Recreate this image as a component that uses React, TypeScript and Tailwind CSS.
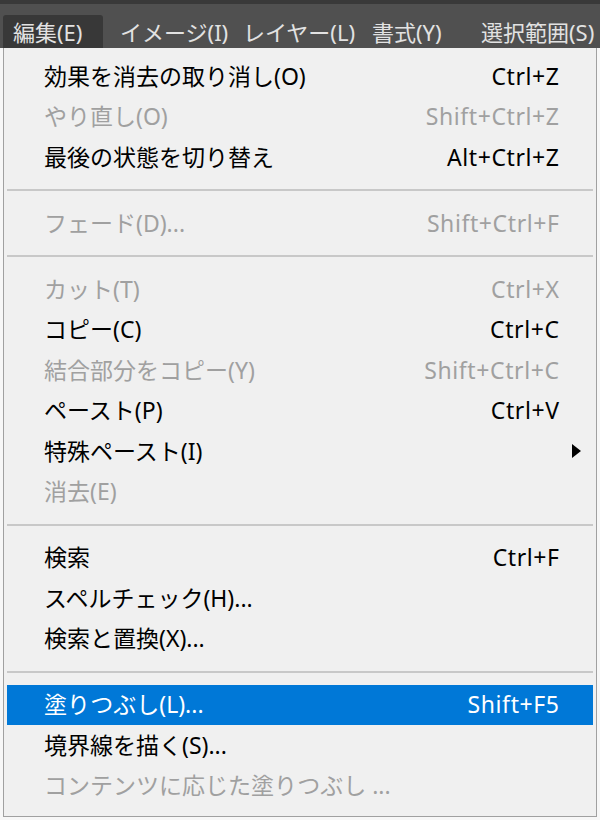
import type { ReactNode } from 'react';

// ─── Data ─────────────────────────────────────────────────────────────────────
type Item = {
  label: string;
  shortcut?: string;
  disabled?: boolean;
  active?: boolean;
  submenu?: boolean;
};

type Entry = Item | 'sep';

const MENU_BAR: { label: string; width: string; active?: boolean }[] = [
  { label: '編集(E)', width: 'w-[100px]', active: true },
  { label: 'イメージ(I)', width: 'w-[116px]' },
  { label: 'レイヤー(L)', width: 'w-[122px]' },
  { label: '書式(Y)', width: 'w-[102px]' },
  { label: '選択範囲(S)', width: 'w-[140px]' },
];

const ENTRIES: Entry[] = [
  { label: '効果を消去の取り消し(O)', shortcut: 'Ctrl+Z' },
  { label: 'やり直し(O)', shortcut: 'Shift+Ctrl+Z', disabled: true },
  { label: '最後の状態を切り替え', shortcut: 'Alt+Ctrl+Z' },
  'sep',
  { label: 'フェード(D)...', shortcut: 'Shift+Ctrl+F', disabled: true },
  'sep',
  { label: 'カット(T)', shortcut: 'Ctrl+X', disabled: true },
  { label: 'コピー(C)', shortcut: 'Ctrl+C' },
  { label: '結合部分をコピー(Y)', shortcut: 'Shift+Ctrl+C', disabled: true },
  { label: 'ペースト(P)', shortcut: 'Ctrl+V' },
  { label: '特殊ペースト(I)', submenu: true },
  { label: '消去(E)', disabled: true },
  'sep',
  { label: '検索', shortcut: 'Ctrl+F' },
  { label: 'スペルチェック(H)...' },
  { label: '検索と置換(X)...' },
  'sep',
  { label: '塗りつぶし(L)...', shortcut: 'Shift+F5', active: true },
  { label: '境界線を描く(S)...' },
  { label: 'コンテンツに応じた塗りつぶし ...', disabled: true },
];

// ─── Pieces ───────────────────────────────────────────────────────────────────
function SubmenuArrow() {
  return (
    <svg width="9" height="14" viewBox="0 0 9 14" aria-hidden="true">
      <path d="M0 0 L9 7 L0 14 Z" fill="#000" />
    </svg>
  );
}

function MenuRow({ item }: { item: Item }) {
  const color = item.active
    ? 'bg-[#0078d7] text-white'
    : item.disabled
      ? 'text-[#a0a0a0]'
      : 'text-black';

  let arrow: ReactNode = null;
  if (item.submenu) arrow = <SubmenuArrow />;

  return (
    <div className={`h-[40.5px] flex items-center pl-[37px] pr-[12px] ${color}`}>
      <span className="flex-1 whitespace-nowrap">{item.label}</span>
      {item.shortcut && (
        <span className="whitespace-nowrap tracking-[0.6px] mr-[-0.6px]">{item.shortcut}</span>
      )}
      <span className="w-[22px] flex justify-end items-center">{arrow}</span>
    </div>
  );
}

function Separator() {
  return (
    <div className="h-[25.5px] flex items-center">
      <div className="w-full h-[2px] bg-[#c8c8c8]" />
    </div>
  );
}

// ─── Page ─────────────────────────────────────────────────────────────────────
export default function App() {
  return (
    <div
      className="w-[600px] h-[820px] overflow-hidden bg-[#f7f7f7] leading-none"
      style={{ fontFamily: '"Noto Sans", "Noto Sans CJK JP", sans-serif' }}
    >
      {/* Menu bar */}
      <div className="h-[48px] bg-[#505050] border-t-[4px] border-[#393939] flex items-end pl-[3px] gap-[7px]">
        {MENU_BAR.map((m) => (
          <div
            key={m.label}
            className={`h-[33px] shrink-0 flex items-center pl-[10px] text-[22px] text-[#e2e2e2] whitespace-nowrap ${m.width} ${
              m.active ? 'bg-[#383838] rounded-t-[3px]' : ''
            }`}
          >
            {m.label}
          </div>
        ))}
      </div>

      {/* Dropdown */}
      <div className="px-[3px]">
        <div className="bg-[#f0f0f0] border-x border-b border-[#a0a0a0] px-[3px] pt-[8px] pb-[10px] text-[23px]">
          {ENTRIES.map((e, i) =>
            e === 'sep' ? <Separator key={i} /> : <MenuRow key={i} item={e} />,
          )}
        </div>
      </div>
    </div>
  );
}
